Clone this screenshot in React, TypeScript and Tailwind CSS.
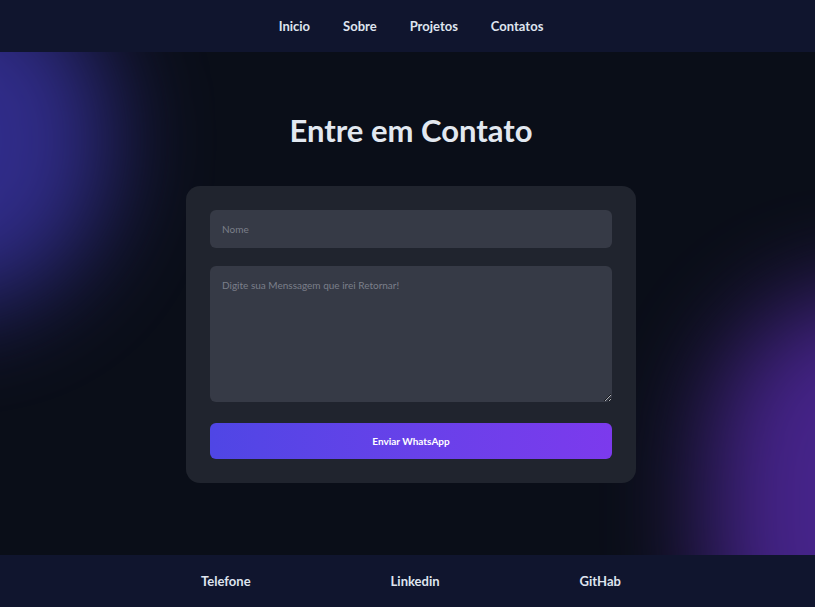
import React from "react";

export default function App() {
  return (
    <div
      className="relative min-h-[607px] w-full overflow-hidden bg-[#0a0e18] flex flex-col pl-[7px]"
      style={{ fontFamily: 'Lato, "Noto Sans", sans-serif' }}
    >
      <div className="pointer-events-none absolute left-[-210px] top-[-30px] h-[340px] w-[320px] rounded-full bg-[#3a34a6] opacity-80 blur-[50px]" />
      <div className="pointer-events-none absolute right-[-215px] top-[290px] h-[430px] w-[320px] rounded-full bg-[#5a2bb0] opacity-75 blur-[50px]" />

      <header className="relative z-10 -ml-[7px] pl-[7px] h-[52px] bg-[#10152e] flex items-center justify-center gap-[33px] text-[13px] font-bold text-[#dfe4ee] pt-px">
        <a>Inicio</a>
        <a>Sobre</a>
        <a>Projetos</a>
        <a>Contatos</a>
      </header>

      <main className="relative z-10 flex-1 flex flex-col items-center pt-[58px] pb-[72px]">
        <h1 className="text-[31px] leading-[40px] font-bold text-[#e2e8f0]">Entre em Contato</h1>
        <form className="mt-[36px] w-[450px] rounded-[14px] bg-[#20242e] p-6 flex flex-col">
          <input
            placeholder="Nome"
            className="h-[38px] rounded-md bg-[#363a46] px-3 text-[10px] text-gray-200 placeholder:text-[#7b7f8a] outline-none"
          />
          <textarea
            placeholder="Digite sua Menssagem que irei Retornar!"
            className="mt-[18px] h-[136px] rounded-md bg-[#363a46] px-3 py-3 text-[10px] text-gray-200 placeholder:text-[#7b7f8a] outline-none"
          />
          <button
            type="button"
            className="mt-[21px] h-[36px] rounded-md bg-gradient-to-r from-[#4f46e5] to-[#7c3aed] text-[10px] font-bold text-white"
          >
            Enviar WhatsApp
          </button>
        </form>
      </main>

      <footer className="relative z-10 -ml-[7px] pl-[7px] h-[52px] bg-[#10152e] flex items-center justify-center gap-[140px] text-[13px] font-bold text-[#dfe4ee] pt-[2px]">
        <a>Telefone</a>
        <a>Linkedin</a>
        <a>GitHab</a>
      </footer>
    </div>
  );
}
